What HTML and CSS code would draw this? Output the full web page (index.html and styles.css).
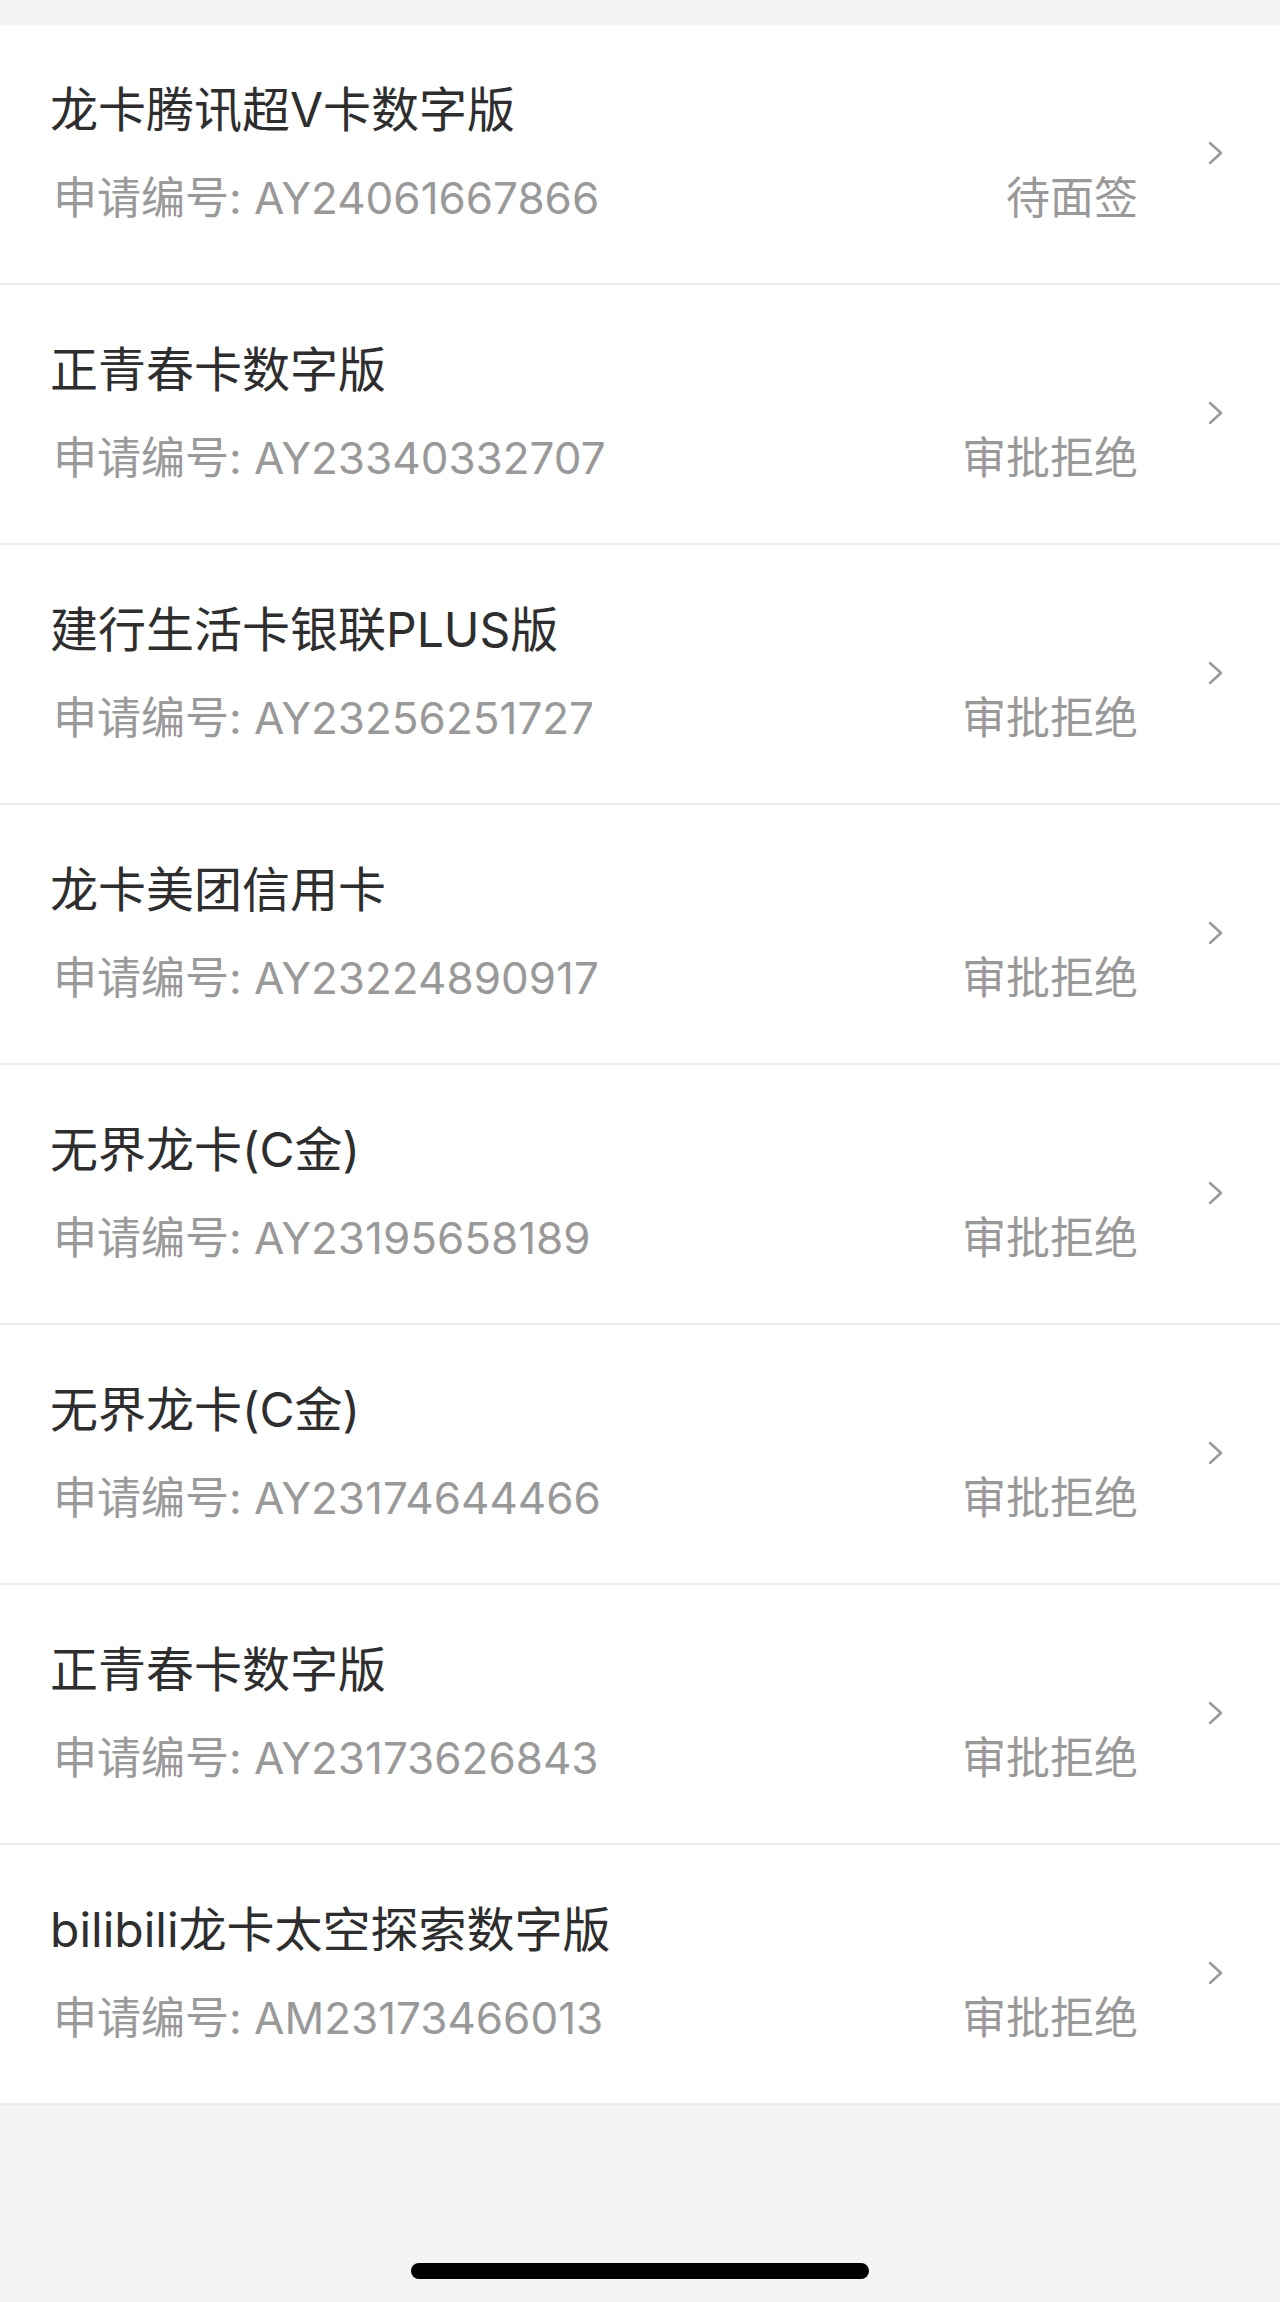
FILE: index.html
```html
<!DOCTYPE html>
<html lang="zh-CN">
<head>
  <meta charset="UTF-8">
  <meta name="viewport" content="width=device-width, initial-scale=1.0">
  <title>申请进度</title>
  <link rel="stylesheet" href="styles.css">
</head>
<body>

  <ul class="list">
    <li class="item">
      <div class="info">
        <div class="title">龙卡腾讯超V卡数字版</div>
        <div class="meta"><span>申请编号: AY24061667866</span><span class="status">待面签</span></div>
      </div>
      <svg class="arrow" width="16" height="24" viewBox="0 0 16 24"><polyline points="2,2 13,12 2,22"/></svg>
    </li>
    <li class="item">
      <div class="info">
        <div class="title">正青春卡数字版</div>
        <div class="meta"><span>申请编号: AY23340332707</span><span class="status">审批拒绝</span></div>
      </div>
      <svg class="arrow" width="16" height="24" viewBox="0 0 16 24"><polyline points="2,2 13,12 2,22"/></svg>
    </li>
    <li class="item">
      <div class="info">
        <div class="title">建行生活卡银联PLUS版</div>
        <div class="meta"><span>申请编号: AY23256251727</span><span class="status">审批拒绝</span></div>
      </div>
      <svg class="arrow" width="16" height="24" viewBox="0 0 16 24"><polyline points="2,2 13,12 2,22"/></svg>
    </li>
    <li class="item">
      <div class="info">
        <div class="title">龙卡美团信用卡</div>
        <div class="meta"><span>申请编号: AY23224890917</span><span class="status">审批拒绝</span></div>
      </div>
      <svg class="arrow" width="16" height="24" viewBox="0 0 16 24"><polyline points="2,2 13,12 2,22"/></svg>
    </li>
    <li class="item">
      <div class="info">
        <div class="title">无界龙卡(C金)</div>
        <div class="meta"><span>申请编号: AY23195658189</span><span class="status">审批拒绝</span></div>
      </div>
      <svg class="arrow" width="16" height="24" viewBox="0 0 16 24"><polyline points="2,2 13,12 2,22"/></svg>
    </li>
    <li class="item">
      <div class="info">
        <div class="title">无界龙卡(C金)</div>
        <div class="meta"><span>申请编号: AY23174644466</span><span class="status">审批拒绝</span></div>
      </div>
      <svg class="arrow" width="16" height="24" viewBox="0 0 16 24"><polyline points="2,2 13,12 2,22"/></svg>
    </li>
    <li class="item">
      <div class="info">
        <div class="title">正青春卡数字版</div>
        <div class="meta"><span>申请编号: AY23173626843</span><span class="status">审批拒绝</span></div>
      </div>
      <svg class="arrow" width="16" height="24" viewBox="0 0 16 24"><polyline points="2,2 13,12 2,22"/></svg>
    </li>
    <li class="item">
      <div class="info">
        <div class="title">bilibili龙卡太空探索数字版</div>
        <div class="meta"><span>申请编号: AM23173466013</span><span class="status">审批拒绝</span></div>
      </div>
      <svg class="arrow" width="16" height="24" viewBox="0 0 16 24"><polyline points="2,2 13,12 2,22"/></svg>
    </li>
  </ul>

  <div class="home-bar"></div>

</body>
</html>
```

FILE: styles.css
```css
html, body {
  height: 100%;
}

body {
  font-family: Inter, "Noto Sans CJK SC", sans-serif;
  margin: 0;
  padding: 0;
  background-color: #f4f4f4;
  color: #333;
  display: flex;
  flex-direction: column;
}

.list {
  list-style: none;
  margin: 25px 0 0;
  padding: 0;
  background-color: #fff;
}

.item {
  display: flex;
  align-items: center;
  padding: 55px 56px 57px 50px;
  border-bottom: 2px solid #ececec;
}

.info {
  flex: 1;
}

.title {
  font-size: 48px;
  line-height: 60px;
  color: #2e2e2e;
}

.meta {
  display: flex;
  justify-content: space-between;
  margin-top: 30px;
  padding-left: 3px;
  font-size: 44px;
  line-height: 56px;
  color: #999;
}

.arrow {
  margin-left: 70px;
  fill: none;
  stroke: #999;
  stroke-width: 2.5;
  stroke-linecap: round;
  stroke-linejoin: round;
}

.home-bar {
  width: 458px;
  height: 16px;
  margin: auto auto 23px;
  background-color: #000;
  border-radius: 8px;
}
```
